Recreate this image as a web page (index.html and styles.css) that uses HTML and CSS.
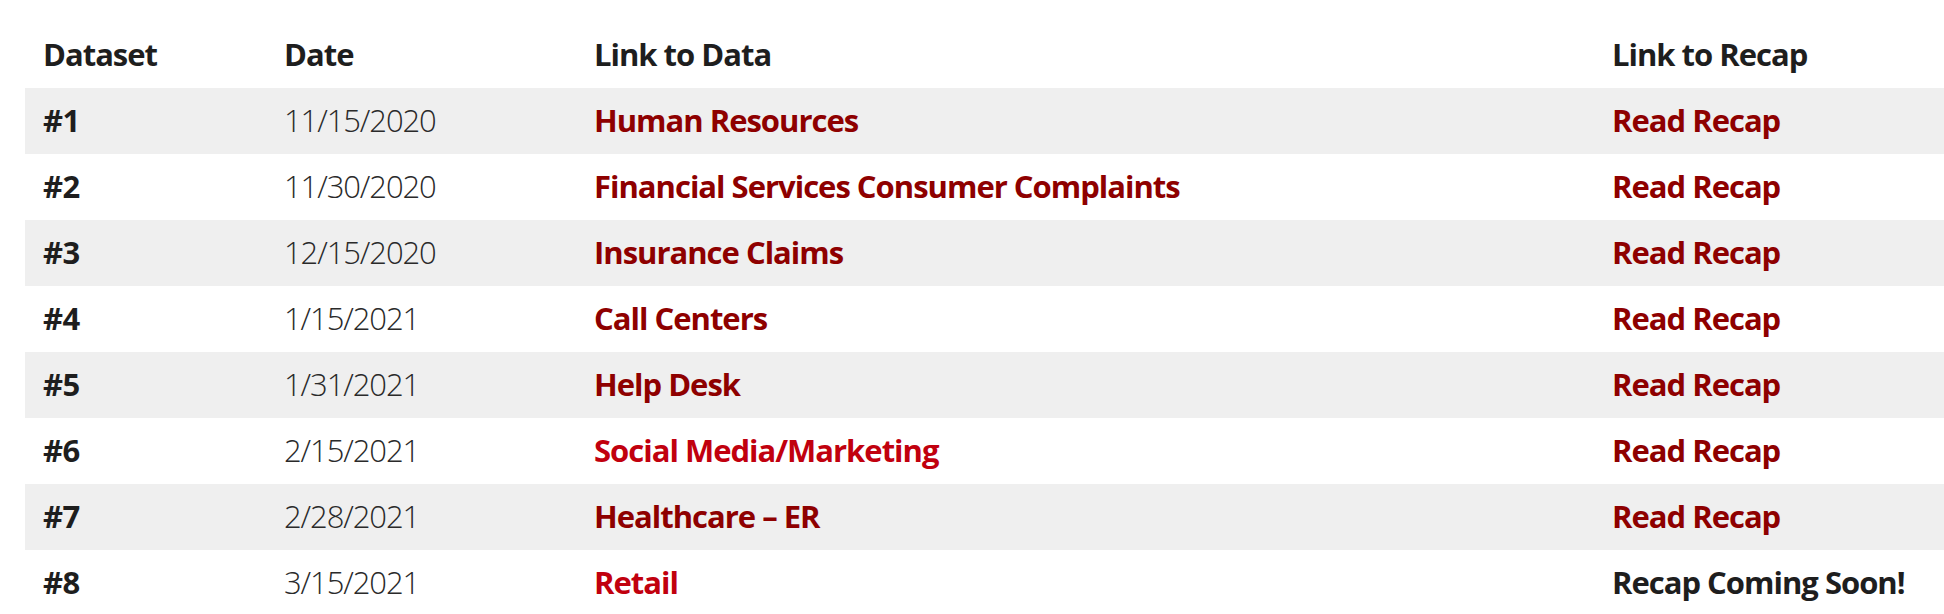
FILE: index.html
```html
<!DOCTYPE html>
<html lang="en">
<head>
<meta charset="utf-8">
<title>Datasets</title>
<link rel="stylesheet" href="styles.css">
</head>
<body>
<table class="datasets">
  <colgroup>
    <col class="c-num">
    <col class="c-date">
    <col class="c-data">
    <col class="c-recap">
  </colgroup>
  <thead>
    <tr>
      <th>Dataset</th>
      <th>Date</th>
      <th>Link to Data</th>
      <th>Link to Recap</th>
    </tr>
  </thead>
  <tbody>
    <tr class="odd"><td class="num">#1</td><td class="date">11/15/2020</td><td><a class="link visited" href="#">Human Resources</a></td><td><a class="link visited" href="#">Read Recap</a></td></tr>
    <tr><td class="num">#2</td><td class="date">11/30/2020</td><td><a class="link visited" href="#">Financial Services Consumer Complaints</a></td><td><a class="link visited" href="#">Read Recap</a></td></tr>
    <tr class="odd"><td class="num">#3</td><td class="date">12/15/2020</td><td><a class="link visited" href="#">Insurance Claims</a></td><td><a class="link visited" href="#">Read Recap</a></td></tr>
    <tr><td class="num">#4</td><td class="date">1/15/2021</td><td><a class="link visited" href="#">Call Centers</a></td><td><a class="link visited" href="#">Read Recap</a></td></tr>
    <tr class="odd"><td class="num">#5</td><td class="date">1/31/2021</td><td><a class="link visited" href="#">Help Desk</a></td><td><a class="link visited" href="#">Read Recap</a></td></tr>
    <tr><td class="num">#6</td><td class="date">2/15/2021</td><td><a class="link fresh" href="#">Social Media/Marketing</a></td><td><a class="link visited" href="#">Read Recap</a></td></tr>
    <tr class="odd"><td class="num">#7</td><td class="date">2/28/2021</td><td><a class="link visited" href="#">Healthcare – ER</a></td><td><a class="link visited" href="#">Read Recap</a></td></tr>
    <tr><td class="num">#8</td><td class="date">3/15/2021</td><td><a class="link fresh" href="#">Retail</a></td><td class="soon">Recap Coming Soon!</td></tr>
  </tbody>
</table>
</body>
</html>
```
FILE: styles.css
```css
html, body {
  margin: 0;
  padding: 0;
  background: #ffffff;
}

body {
  font-family: "Open Sans", "Noto Sans", "Liberation Sans", sans-serif;
  color: #1f1f1f;
  overflow: hidden;
}

.datasets {
  border-collapse: collapse;
  table-layout: fixed;
  width: 1919px;
  margin: 22px 0 0 25px;
}

.c-num { width: 241px; }
.c-date { width: 310px; }
.c-data { width: 1018px; }
.c-recap { width: 350px; }

.datasets th,
.datasets td {
  height: 66px;
  padding: 0 0 2px 18px;
  text-align: left;
  vertical-align: middle;
  font-size: 31px;
  line-height: 40px;
  white-space: nowrap;
  box-sizing: border-box;
}

.datasets th {
  font-weight: 700;
  color: #1e1e1e;
  letter-spacing: -1px;
}

.datasets tr.odd td {
  background: #efefef;
}

.num {
  font-weight: 700;
  color: #1e1e1e;
  letter-spacing: -0.6px;
}

.date {
  font-weight: 300;
  color: #2a2a2a;
  letter-spacing: -1.1px;
}

.link {
  font-weight: 700;
  text-decoration: none;
  letter-spacing: -1px;
}

.link.visited { color: #8e0000; }
.link.fresh { color: #c1000e; }

.soon {
  font-weight: 700;
  color: #1e1e1e;
  letter-spacing: -1px;
}
```
